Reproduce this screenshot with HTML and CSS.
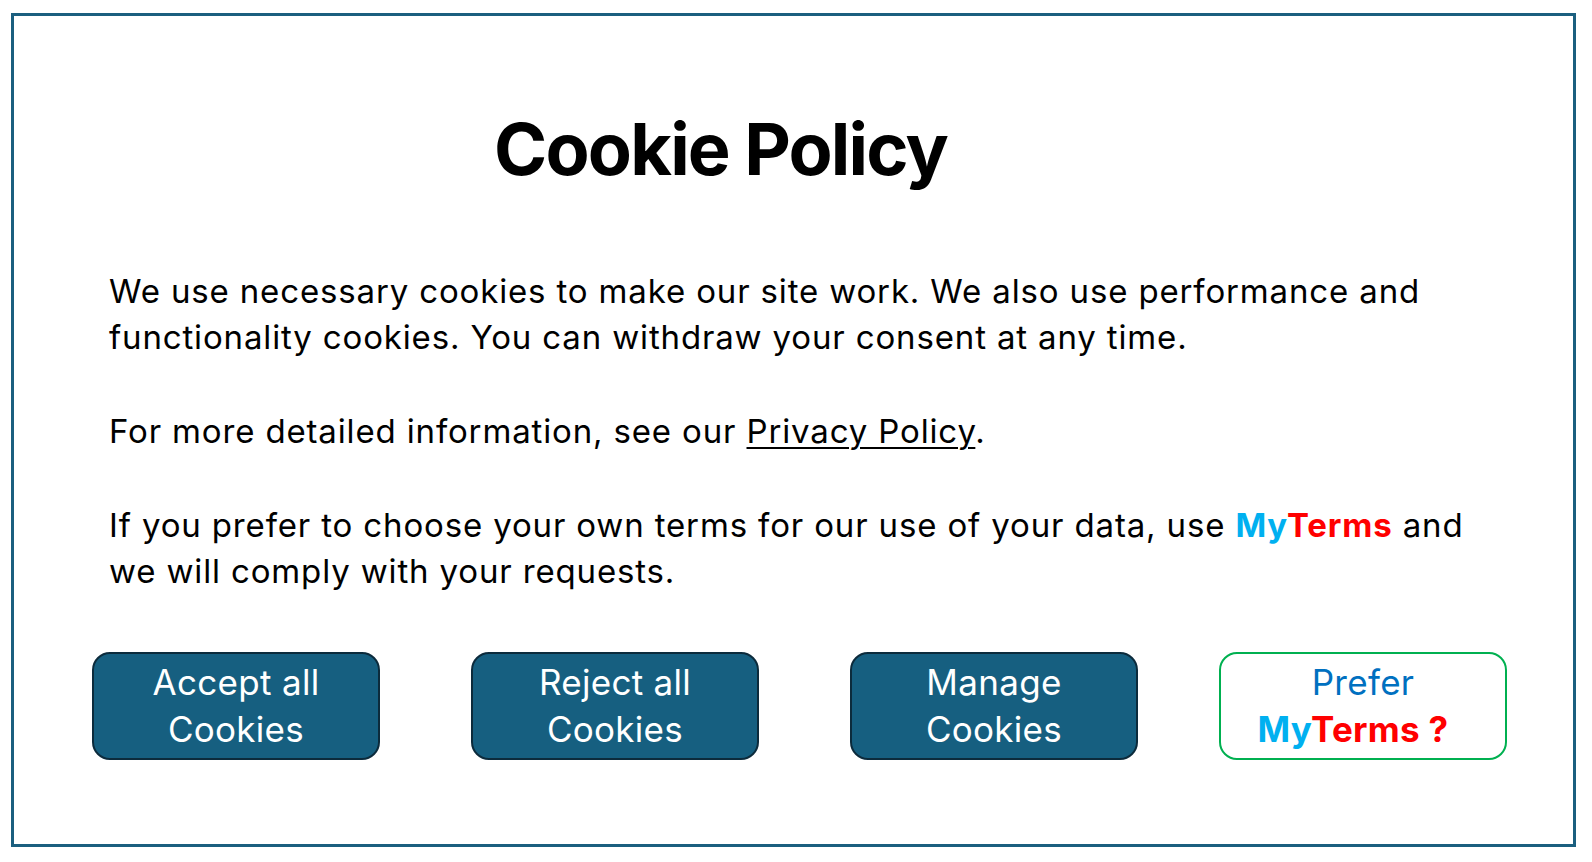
FILE: index.html
```html
<!DOCTYPE html>
<html lang="en">
<head>
<meta charset="utf-8">
<title>Cookie Policy</title>
<link rel="stylesheet" href="styles.css">
</head>
<body>
<div class="frame">
  <h1 class="title">Cookie Policy</h1>
  <div class="text">
    <p class="para">We use necessary cookies to make our site work. We also use performance and<br>functionality cookies. You can withdraw your consent at any time.</p>
    <p class="para">For more detailed information, see our <a class="link" href="#">Privacy Policy</a>.</p>
    <p class="para">If you prefer to choose your own terms for our use of your data, use <span class="my">My</span><span class="terms">Terms</span> and<br>we will comply with your requests.</p>
  </div>
  <div class="buttons">
    <button class="btn">Accept all<br>Cookies</button>
    <button class="btn">Reject all<br>Cookies</button>
    <button class="btn">Manage<br>Cookies</button>
    <button class="btn btn-prefer"><span class="prefer">Prefer</span><br><span class="prefer-line"><span class="my">My</span><span class="terms">Terms ?</span></span></button>
  </div>
</div>
</body>
</html>
```

FILE: styles.css
```css
html, body {
  margin: 0;
  padding: 0;
  background: #ffffff;
}
body {
  font-family: Inter, "Liberation Sans", sans-serif;
  color: #000000;
}
.frame {
  box-sizing: border-box;
  margin: 13px 0 0 11px;
  width: 1565px;
  height: 834px;
  border: 3px solid #1b5f7f;
  padding-top: 93px;
}
.title {
  margin: 0;
  padding-left: 480px;
  font-size: 72px;
  line-height: 80px;
  font-weight: 700;
  letter-spacing: -1.8px;
}
.text {
  margin-top: 79px;
  padding-left: 95px;
}
.para {
  margin: 0 0 48px 0;
  font-size: 33px;
  line-height: 46px;
  letter-spacing: 0.85px;
}
.para:last-child {
  margin-bottom: 0;
}
.link {
  color: #000000;
  text-decoration: underline;
  text-underline-offset: 4px;
  text-decoration-thickness: 2px;
}
.my {
  color: #00b0f0;
  font-weight: 700;
}
.terms {
  color: #ff0000;
  font-weight: 700;
}
.buttons {
  margin-top: 58px;
  padding-left: 78px;
  display: flex;
  gap: 91px;
}
.btn {
  box-sizing: border-box;
  width: 288px;
  height: 108px;
  padding: 5px 0;
  border: 2px solid #0c2b3c;
  border-radius: 18px;
  background: #165f80;
  color: #ffffff;
  font-family: Inter, "Liberation Sans", sans-serif;
  font-size: 35px;
  line-height: 47px;
  letter-spacing: 0.3px;
  text-align: center;
  cursor: pointer;
}
.btn-prefer {
  margin-left: -10px;
  background: #ffffff;
  border-color: #00b050;
}
.prefer {
  color: #0070c0;
}
.prefer-line {
  padding-right: 20px;
}
```
